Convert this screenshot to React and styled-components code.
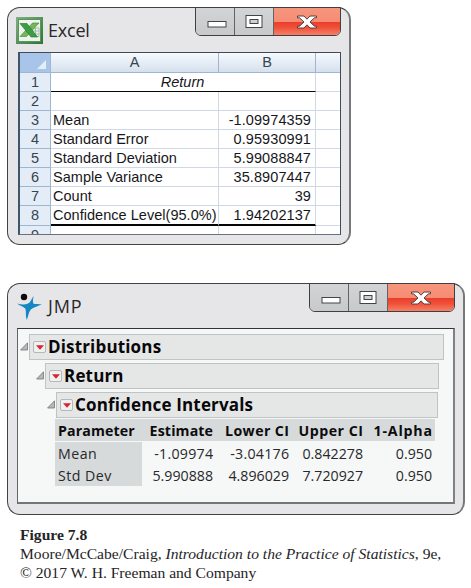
import React from "react";
import styled, { createGlobalStyle } from "styled-components";

const GlobalStyle = createGlobalStyle`
  * { box-sizing: border-box; }
  body { margin: 0; background: #fff; }
`;

const Page = styled.main`
  width: 471px;
  height: 588px;
  padding: 7px 0 0 7px;
  overflow: hidden;
  display: flex;
  flex-direction: column;
  align-items: flex-start;
`;

const Window = styled.section`
  width: ${(p) => p.$width}px;
  height: ${(p) => p.$height}px;
  margin-bottom: ${(p) => p.$gap}px;
  background: #e6e6e8;
  border: 1px solid #424244;
  border-right: 2px solid #77787a;
  border-radius: 13px;
`;

const TitleBar = styled.header`
  height: 44px;
  display: flex;
  align-items: flex-start;
  padding: 0 8px;
  svg { flex: none; display: block; }
`;

const LogoSlot = styled.div`
  flex: none;
  margin-top: 9px;
`;

const AppTitle = styled.h1`
  margin: ${(p) => p.$top}px auto 0 ${(p) => p.$left}px;
  font: 400 18px/24px "Open Sans", sans-serif;
  letter-spacing: ${(p) => p.$spacing}px;
  color: #28282a;
`;

const Controls = styled.div`
  display: flex;
  width: 146px;
  height: 29px;
  margin-top: -1px;
  border: 1px solid #3f4042;
  border-radius: 0 0 6px 6px;
  overflow: hidden;
`;

const ControlButton = styled.div`
  width: ${(p) => (p.$close ? 66 : 39)}px;
  display: flex;
  align-items: center;
  justify-content: center;
  padding: ${(p) => (p.$minimize ? "4px 0 0 4px" : 0)};
  border-right: ${(p) => (p.$close ? "0" : "1px solid #626365")};
  background: ${(p) =>
    p.$close
      ? "linear-gradient(#f7957d 0, #f58d74 50%, #ea3c2c 52%, #ef5037 72%, #f58067 100%)"
      : "linear-gradient(#d3d4d6, #c8c9cb)"};
`;

const SheetFrame = styled.div`
  width: 323px;
  height: 183px;
  margin-left: 10px;
  border: 1px solid #3c4c58;
  border-left: 2px solid #3d566b;
  border-bottom-color: #69727a;
  background: #fff;
  overflow: hidden;
`;

const SheetRow = styled.div`
  display: grid;
  grid-template-columns: 31px 168px 97px 24px;
  grid-template-rows: 100%;
  height: ${(p) => p.$height || 19}px;
  font: 14.5px/19px "Liberation Sans", Arial, sans-serif;
  color: #17171b;
`;

const HeadCell = styled.div`
  display: flex;
  align-items: center;
  justify-content: center;
  border-right: 1px solid #9eb6ce;
  border-bottom: 1px solid #9eb6ce;
  color: #35454f;
  background: ${(p) =>
    p.$column ? "linear-gradient(#f7fafd, #d5e0ee)" : "#e4ecf7"};
  &:last-child { border-right: 0; }
`;

const Corner = styled(HeadCell)`
  align-items: flex-end;
  justify-content: flex-end;
  padding: 0 4px 3px 0;
  background: #a9c4e9;
`;

const Cell = styled.div`
  border-right: 1px solid #d0d7e5;
  border-bottom: ${(p) => (p.$rule ? `${p.$rule}px solid #050505` : "1px solid #d0d7e5")};
  padding: 0 0 0 2px;
  white-space: nowrap;
  letter-spacing: 0.03px;
  &:last-child { border-right: 0; }
`;

const NumberCell = styled(Cell)`
  padding: 0 4px 0 0;
  text-align: right;
  letter-spacing: 0.08px;
`;

const MergedCell = styled(Cell)`
  grid-column: span 2;
  padding-right: 3px;
  font-style: italic;
  text-align: center;
`;

const ReportFrame = styled.div`
  width: 438px;
  height: 176px;
  margin-left: 9px;
  padding: 5px 0 0 2px;
  background: #f6f7f7;
  border: 1px solid #343436;
  border-left-color: #646568;
  border-right: 2px solid #808184;
  border-bottom: 2px solid #747578;
`;

const OutlineRow = styled.div`
  display: flex;
  height: 26px;
  margin: 0 0 3px ${(p) => p.$indent}px;
`;

const Disclosure = styled.div`
  width: 9px;
  padding-top: 8px;
  svg { display: block; }
`;

const OutlineBar = styled.div`
  width: ${(p) => p.$width}px;
  height: 26px;
  display: flex;
  align-items: center;
  padding-left: 3px;
  gap: 2px;
  background: #e5e6e6;
  border: 1px solid #bfc3c4;
`;

const OutlineTitle = styled.h2`
  margin: 0;
  font: 700 17px/24px "Open Sans", sans-serif;
  letter-spacing: 0.16px;
  color: #08080a;
  white-space: nowrap;
`;

const MenuBox = styled.div`
  width: 13px;
  height: 12px;
  flex: none;
  display: flex;
  align-items: center;
  justify-content: center;
  border: 1px solid #b4b8b9;
  border-radius: 2px;
  background: #eff0f0;
`;

const Estimates = styled.div`
  width: 380px;
  margin: -2px 0 0 35px;
`;

const EstimateRow = styled.div`
  display: grid;
  grid-template-columns: 87px 71px 76px 74px 72px;
  height: 22px;
  font: ${(p) => (p.$head ? 700 : 400)} 14.2px/23px "Open Sans", sans-serif;
  color: ${(p) => (p.$head ? "#0c0c0e" : "#27282a")};
  background: ${(p) => (p.$head ? "#d7dada" : "transparent")};
  margin-bottom: ${(p) => (p.$head ? 1 : 0)}px;
`;

const Value = styled.span`
  text-align: right;
  white-space: nowrap;
  letter-spacing: ${(p) => p.$spacing || 0}px;
  margin-right: ${(p) => -(p.$spacing || 0)}px;
  &:last-child { padding-right: 3px; }
`;

const Label = styled.span`
  height: 22px;
  padding-left: 3px;
  background: #d7dada;
  white-space: nowrap;
  letter-spacing: ${(p) => p.$spacing || 0}px;
`;

const Caption = styled.footer`
  margin: 11px 0 0 13px;
  font: 15.6px/18.8px "Liberation Serif", "Times New Roman", serif;
  color: #242426;
  white-space: nowrap;
`;

const CaptionLine = styled.div`
  font-weight: ${(p) => (p.$bold ? 700 : 400)};
`;

function WindowControls() {
  return (
    <Controls>
      <ControlButton $minimize>
        <svg width="20" height="10" viewBox="0 0 20 10">
          <rect x="1" y="2.5" width="18" height="5.5" fill="#fff" stroke="#434446" />
        </svg>
      </ControlButton>
      <ControlButton>
        <svg width="18" height="15" viewBox="0 0 18 15">
          <rect x="1" y="1.5" width="16" height="12" fill="#fff" stroke="#434446" />
          <rect x="5" y="5.5" width="8" height="4" fill="#d0d1d3" stroke="#434446" />
        </svg>
      </ControlButton>
      <ControlButton $close>
        <svg width="22" height="16" viewBox="0 0 22 16">
          <path
            d="M1.500 2H8L11 5.200L14 2H20.500V3.800H18.500L14 8L18.500 12.200H20.500V14H14L11 10.800L8 14H1.500V12.200H3.500L8 8L3.500 3.800H1.500Z"
            fill="#fff"
            stroke="#56403e"
            strokeWidth="1"
          />
        </svg>
      </ControlButton>
    </Controls>
  );
}

function ExcelLogo() {
  return (
    <svg width="27" height="27" viewBox="0 0 27 27">
      <defs>
        <linearGradient id="frame" x2="1" y2="1">
          <stop stopColor="#7fb17c" />
          <stop offset="1" stopColor="#2f7333" />
        </linearGradient>
      </defs>
      <rect width="27" height="27" fill="url(#frame)" />
      <rect x="2.5" y="2.5" width="22" height="22" fill="#edf4ed" stroke="#5b9460" />
      <path d="M15 11H23V19.500H15M15 14H23M15 17H23M19.500 11V19.500" fill="none" stroke="#9bbf9f" />
      <path d="M16.500 6H23L10.500 19.500H4Z" fill="#75b758" stroke="#3c833c" strokeWidth=".6" />
      <path d="M4 6.500H11L21.500 20H15Z" fill="#3e9c43" stroke="#257033" strokeWidth=".6" />
    </svg>
  );
}

function JmpLogo() {
  return (
    <svg width="27" height="28" viewBox="0 0 27 28">
      <circle cx="8" cy="4" r="3.200" fill="#0c0c0e" />
      <path
        d="M.8 10.500C7 12 12 11.800 14 9C15.300 7 16 5 17.800 3C16.700 6 16.700 9 17.500 10.700C20 11.200 23 11 26 11.200C22 13.200 18 14.300 15.500 16C12.500 18.500 12.500 23 10.800 27C9.300 23 10.300 19 9.500 16C8.500 14 4.500 13 .8 10.500Z"
        fill="#1588c4"
      />
    </svg>
  );
}

const sheetRows = [
  ["Mean", "-1.09974359"],
  ["Standard Error", "0.95930991"],
  ["Standard Deviation", "5.99088847"],
  ["Sample Variance", "35.8907447"],
  ["Count", "39"],
  ["Confidence Level(95.0%)", "1.94202137"],
];

const outline = [
  { title: "Distributions", indent: 0, width: 415 },
  { title: "Return", indent: 16, width: 394 },
  { title: "Confidence Intervals", indent: 27, width: 382 },
];

const columns = [
  { title: "Estimate", spacing: 0.12 },
  { title: "Lower CI", spacing: 0.4 },
  { title: "Upper CI", spacing: 0.5 },
  { title: "1-Alpha", spacing: 0.8 },
];

const estimates = [
  ["Mean", "-1.09974", "-3.04176", "0.842278", "0.950"],
  ["Std Dev", "5.990888", "4.896029", "7.720927", "0.950"],
];

export default function App() {
  return (
    <>
      <GlobalStyle />
      <Page>
        <Window $width={344} $height={238} $gap={38}>
          <TitleBar>
            <LogoSlot><ExcelLogo /></LogoSlot>
            <AppTitle $top={10} $left={5} $spacing={-0.2}>Excel</AppTitle>
            <WindowControls />
          </TitleBar>
          <SheetFrame>
            <SheetRow $height={20}>
              <Corner>
                <svg width="9" height="9" viewBox="0 0 9 9"><path d="M9 0V9H0Z" fill="#e5edf8" /></svg>
              </Corner>
              <HeadCell $column>A</HeadCell>
              <HeadCell $column>B</HeadCell>
              <HeadCell $column />
            </SheetRow>
            <SheetRow>
              <HeadCell>1</HeadCell>
              <MergedCell $rule={1}>Return</MergedCell>
              <Cell />
            </SheetRow>
            <SheetRow>
              <HeadCell>2</HeadCell>
              <Cell /><Cell /><Cell />
            </SheetRow>
            {sheetRows.map(([label, value], i) => (
              <SheetRow key={label} $height={i === 5 ? 20 : 19}>
                <HeadCell>{i + 3}</HeadCell>
                <Cell $rule={i === 5 ? 2 : 0}>{label}</Cell>
                <NumberCell $rule={i === 5 ? 2 : 0}>{value}</NumberCell>
                <Cell />
              </SheetRow>
            ))}
            <SheetRow>
              <HeadCell>9</HeadCell>
              <Cell /><Cell /><Cell />
            </SheetRow>
          </SheetFrame>
        </Window>

        <Window $width={458} $height={232} $gap={0}>
          <TitleBar>
            <LogoSlot><JmpLogo /></LogoSlot>
            <AppTitle $top={10} $left={5} $spacing={0.9}>JMP</AppTitle>
            <WindowControls />
          </TitleBar>
          <ReportFrame>
            {outline.map((item) => (
              <OutlineRow key={item.title} $indent={item.indent}>
                <Disclosure>
                  <svg width="8" height="9" viewBox="0 0 8 9">
                    <path d="M7.500 .8V8H.6Z" fill="#b6b8ba" stroke="#737578" strokeWidth=".8" />
                  </svg>
                </Disclosure>
                <OutlineBar $width={item.width}>
                  <MenuBox>
                    <svg width="8" height="5" viewBox="0 0 8 5"><path d="M0 .3H8L4 4.700Z" fill="#d82331" /></svg>
                  </MenuBox>
                  <OutlineTitle>{item.title}</OutlineTitle>
                </OutlineBar>
              </OutlineRow>
            ))}
            <Estimates>
              <EstimateRow $head>
                <Label $spacing={0.1}>Parameter</Label>
                {columns.map((column) => (
                  <Value key={column.title} $spacing={column.spacing}>{column.title}</Value>
                ))}
              </EstimateRow>
              {estimates.map(([label, ...values]) => (
                <EstimateRow key={label}>
                  <Label $spacing={0.45}>{label}</Label>
                  {values.map((value, i) => (
                    <Value key={i} $spacing={value.startsWith("-") ? 0.25 : 0}>{value}</Value>
                  ))}
                </EstimateRow>
              ))}
            </Estimates>
          </ReportFrame>
        </Window>

        <Caption>
          <CaptionLine $bold>Figure 7.8</CaptionLine>
          <CaptionLine>
            Moore/McCabe/Craig, <em>Introduction to the Practice of Statistics</em>, 9e,
          </CaptionLine>
          <CaptionLine>© 2017 W. H. Freeman and Company</CaptionLine>
        </Caption>
      </Page>
    </>
  );
}
